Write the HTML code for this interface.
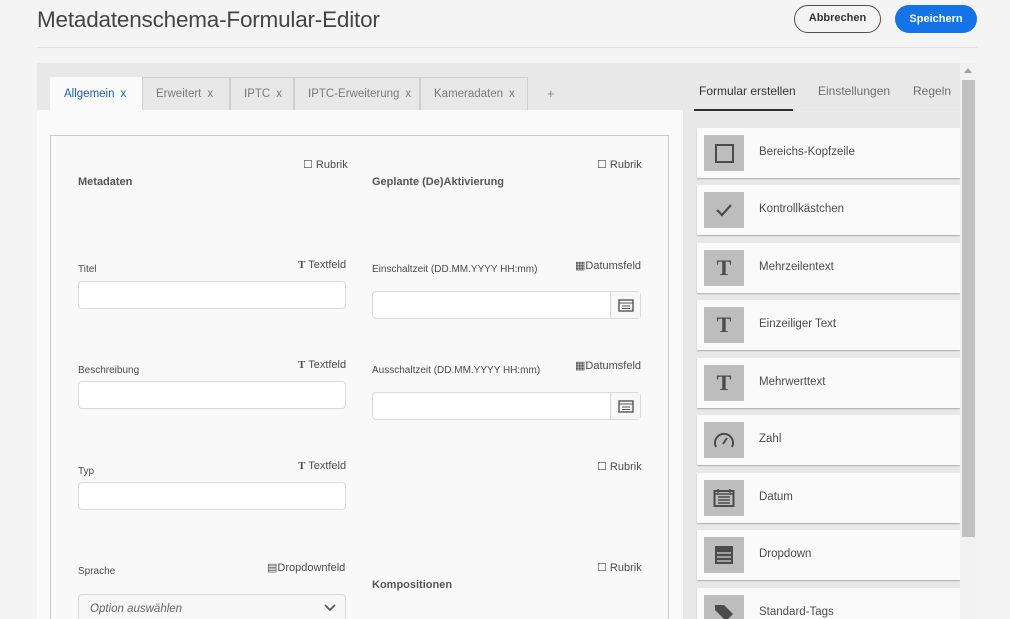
<!DOCTYPE html><html style="width:1010px;height:619px;overflow:hidden"><head><meta charset="utf-8"><style>
*{box-sizing:border-box;margin:0;padding:0}
body{width:1010px;height:619px;overflow:hidden;background:#f4f4f4;font-family:"Liberation Sans",sans-serif;position:relative;color:#4b4b4b}
.a{position:absolute}
.t{font-size:11px;color:#4b4b4b;white-space:nowrap}
.inp{position:absolute;height:28px;background:#fff;border:1px solid #dadada;border-radius:4px}
.card{position:absolute;left:697px;width:263px;height:50px;background:#fafafa;box-shadow:0 1px 1px #aaa}
.ic{position:absolute;left:7px;top:7px;width:40px;height:36px;background:#bdbdbd;display:flex;align-items:center;justify-content:center}
.cl{position:absolute;left:62px;top:18px;font-size:11.5px;color:#4b4b4b}
.tab{position:absolute;top:77px;height:33px;background:#e8e8e8;border:1px solid #cfcfcf;border-bottom:none;font-size:11.5px;color:#7a7a7a;padding:10px 0 0 13px;white-space:nowrap}
.tab b{font-weight:normal;margin-left:6px}
.cal{position:absolute;right:0;top:0;width:30px;height:100%;border-left:1px solid #dadada;background:#f7f7f7;display:flex;align-items:center;justify-content:center}
</style></head><body>
<div class="a" style="left:37px;top:7px;font-size:22.5px;color:#444;letter-spacing:-0.2px">Metadatenschema-Formular-Editor</div>
<div class="a" style="left:794px;top:5px;width:87px;height:28px;border:1.5px solid #505050;border-radius:14px;font-size:11px;font-weight:bold;color:#333;text-align:center;line-height:25px">Abbrechen</div>
<div class="a" style="left:895px;top:5px;width:82px;height:28px;background:#1473e6;border-radius:14px;font-size:11px;font-weight:bold;color:#fff;text-align:center;line-height:28px">Speichern</div>
<div class="a" style="left:37px;top:47px;width:940px;height:1px;background:#e3e3e3"></div>
<div class="a" style="left:37px;top:63px;width:923px;height:556px;background:#e8e8e8"></div>
<div class="tab" style="left:50px;width:92px;background:#fafafa;color:#1a5fb4;border-color:#fafafa">Allgemein<b>x</b></div>
<div class="tab" style="left:142px;width:88px">Erweitert<b>x</b></div>
<div class="tab" style="left:230px;width:64px">IPTC<b>x</b></div>
<div class="tab" style="left:294px;width:126px">IPTC-Erweiterung<b>x</b></div>
<div class="tab" style="left:420px;width:108px">Kameradaten<b>x</b></div>
<div class="a" style="left:547px;top:86px;font-size:13px;color:#888">+</div>
<div class="a" style="left:37px;top:110px;width:646px;height:509px;background:#fafafa"></div>
<div class="a" style="left:50px;top:135px;width:619px;height:484px;border:1px solid #c8c8c8;border-bottom:none;background:#f9f9f9"></div>

<div class="a t" style="left:303px;top:158px">☐ Rubrik</div>
<div class="a t" style="left:78px;top:176px;font-weight:bold;color:#555">Metadaten</div>
<div class="a t" style="left:597px;top:158px">☐ Rubrik</div>
<div class="a t" style="left:372px;top:176px;font-weight:bold;color:#555">Geplante (De)Aktivierung</div>

<div class="a t" style="left:78px;top:264px;font-size:10px">Titel</div>
<div class="a t" style="left:298px;top:259px"><span style="font-family:'Liberation Serif';font-weight:bold">T</span> Textfeld</div>
<div class="inp" style="left:78px;top:281px;width:268px"></div>
<div class="a t" style="left:78px;top:365px;font-size:10px">Beschreibung</div>
<div class="a t" style="left:298px;top:359px"><span style="font-family:'Liberation Serif';font-weight:bold">T</span> Textfeld</div>
<div class="inp" style="left:78px;top:381px;width:268px"></div>
<div class="a t" style="left:78px;top:466px;font-size:10px">Typ</div>
<div class="a t" style="left:298px;top:460px"><span style="font-family:'Liberation Serif';font-weight:bold">T</span> Textfeld</div>
<div class="inp" style="left:78px;top:482px;width:268px"></div>
<div class="a t" style="left:78px;top:566px;font-size:10px">Sprache</div>
<div class="a t" style="left:267px;top:561px">▤Dropdownfeld</div>
<div class="inp" style="left:78px;top:594px;width:268px;height:34px;background:#f7f7f7"><span class="a" style="left:11px;top:8px;font-size:11.5px;font-style:italic;color:#666">Option auswählen</span><svg class="a" style="right:9px;top:9px" width="12" height="8"><path d="M1 1l5 5 5-5" fill="none" stroke="#555" stroke-width="1.8"/></svg></div>

<div class="a t" style="left:372px;top:264px;font-size:10px">Einschaltzeit (DD.MM.YYYY HH:mm)</div>
<div class="a t" style="left:575px;top:259px">▦Datumsfeld</div>
<div class="inp" style="left:372px;top:291px;width:269px"><div class="cal"><svg width="16" height="14"><rect x="1" y="2" width="14" height="11" fill="none" stroke="#555" stroke-width="1.4"/><path d="M1 5h14M4 8h8M4 10.5h8" stroke="#555"/></svg></div></div>
<div class="a t" style="left:372px;top:365px;font-size:10px">Ausschaltzeit (DD.MM.YYYY HH:mm)</div>
<div class="a t" style="left:575px;top:359px">▦Datumsfeld</div>
<div class="inp" style="left:372px;top:392px;width:269px"><div class="cal"><svg width="16" height="14"><rect x="1" y="2" width="14" height="11" fill="none" stroke="#555" stroke-width="1.4"/><path d="M1 5h14M4 8h8M4 10.5h8" stroke="#555"/></svg></div></div>
<div class="a t" style="left:597px;top:460px">☐ Rubrik</div>
<div class="a t" style="left:597px;top:561px">☐ Rubrik</div>
<div class="a t" style="left:372px;top:579px;font-weight:bold;color:#555">Kompositionen</div>

<div class="a" style="left:699px;top:84px;font-size:12px;color:#333">Formular erstellen</div>
<div class="a" style="left:818px;top:84px;font-size:12px;color:#6e6e6e">Einstellungen</div>
<div class="a" style="left:913px;top:84px;font-size:12px;color:#6e6e6e">Regeln</div>
<div class="a" style="left:694px;top:109px;width:99px;height:2px;background:#2c2c2c"></div>
<div class="a" style="left:683px;top:111px;width:277px;height:1px;background:#ececec"></div>

<div class="card" style="top:128px"><div class="ic"><div style="width:19px;height:19px;border:2px solid #4b4b4b"></div></div><div class="cl">Bereichs-Kopfzeile</div></div>
<div class="card" style="top:185px"><div class="ic"><svg width="18" height="14"><path d="M2 7l5 5 9-10" fill="none" stroke="#4b4b4b" stroke-width="2.2"/></svg></div><div class="cl">Kontrollkästchen</div></div>
<div class="card" style="top:243px"><div class="ic"><span style="font-family:'Liberation Serif';font-size:22px;color:#4b4b4b;font-weight:bold">T</span></div><div class="cl">Mehrzeilentext</div></div>
<div class="card" style="top:300px"><div class="ic"><span style="font-family:'Liberation Serif';font-size:22px;color:#4b4b4b;font-weight:bold">T</span></div><div class="cl">Einzeiliger Text</div></div>
<div class="card" style="top:358px"><div class="ic"><span style="font-family:'Liberation Serif';font-size:22px;color:#4b4b4b;font-weight:bold">T</span></div><div class="cl">Mehrwerttext</div></div>
<div class="card" style="top:415px"><div class="ic"><svg width="22" height="18"><path d="M3 16A9 9 0 1 1 19 16" fill="none" stroke="#4b4b4b" stroke-width="2"/><path d="M10 13l4-6" stroke="#4b4b4b" stroke-width="2"/></svg></div><div class="cl">Zahl</div></div>
<div class="card" style="top:473px"><div class="ic"><svg width="22" height="20"><rect x="1.5" y="3" width="19" height="15" fill="none" stroke="#4b4b4b" stroke-width="2"/><path d="M1.5 6h19M5 1v4M17 1v4M5 9h12M5 12h12M5 15h12" stroke="#4b4b4b" stroke-width="1.5"/></svg></div><div class="cl">Datum</div></div>
<div class="card" style="top:530px"><div class="ic"><svg width="20" height="20"><rect x="1" y="1" width="18" height="18" fill="#4b4b4b"/><path d="M3 8h14M3 12h14M3 16h14" stroke="#bdbdbd" stroke-width="1.5"/></svg></div><div class="cl">Dropdown</div></div>
<div class="card" style="top:588px"><div class="ic"><svg width="22" height="20"><path d="M2 2h9l9 9-7 7-11-11z" fill="#4b4b4b"/></svg></div><div class="cl">Standard-Tags</div></div>

<div class="a" style="left:960px;top:63px;width:16px;height:556px;background:#f1f1f1"></div>
<div class="a" style="left:964px;top:68px;width:0;height:0;border-left:4px solid transparent;border-right:4px solid transparent;border-bottom:5px solid #a3a3a3"></div>
<div class="a" style="left:962px;top:80px;width:13px;height:457px;background:#c1c1c1"></div>
</body></html>
